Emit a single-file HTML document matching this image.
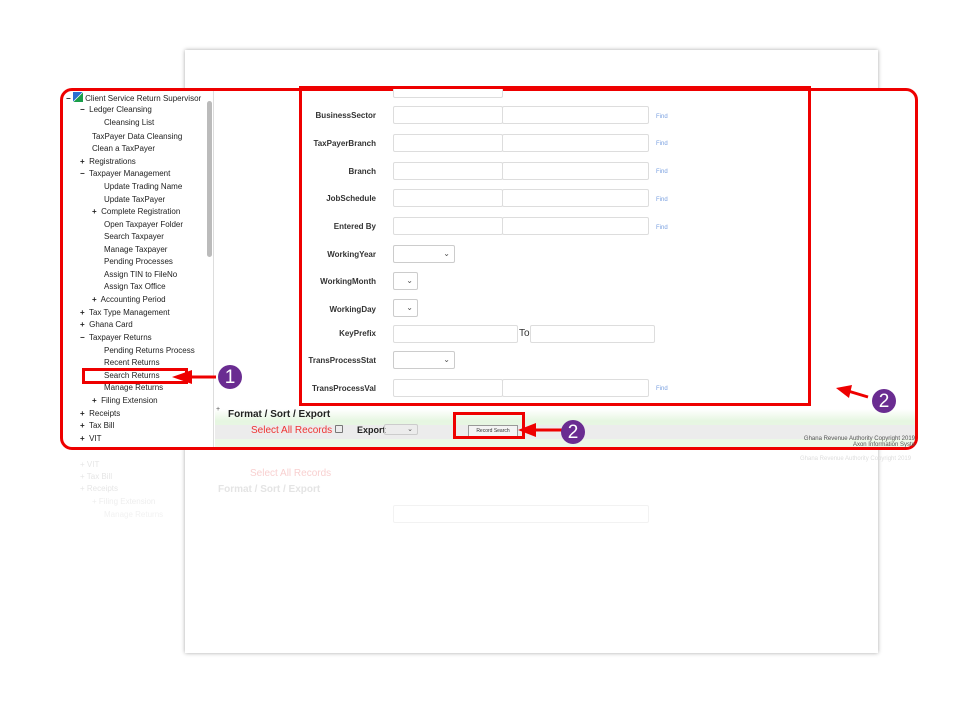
<!DOCTYPE html>
<html><head><meta charset="utf-8"><style>
body{margin:0;width:960px;height:720px;background:#fff;position:relative;overflow:hidden;font-family:"Liberation Sans",Arial,sans-serif}
.a{position:absolute}
.card{left:185px;top:50px;width:693px;height:603px;background:#fff;box-shadow:0 0 4px rgba(0,0,0,.35)}
.nav{font-size:8px;color:#222;white-space:nowrap}
.lbl{font-size:8px;font-weight:bold;color:#333;text-align:right;width:110px;left:266px}
.in{border:1px solid #ddd;border-radius:2px;height:18px;background:#fff;box-sizing:border-box}
.find{font-size:6px;color:#7aa0e0;left:656px}
.sel{border:1px solid #ccc;border-radius:2px;height:18px;box-sizing:border-box;font-size:8px;color:#555;text-align:right;padding-right:4px;line-height:16px}
.circ{width:24px;height:24px;border-radius:50%;background:#6a2c91;color:#fff;font-size:19px;text-align:center;line-height:25px}
.r{color:#e6e6e6}
</style></head><body>
<div class="a card"></div>
<!-- reflection -->
<div class="a nav r" style="left:80px;top:460px">+ VIT</div>
<div class="a nav r" style="left:80px;top:472px">+ Tax Bill</div>
<div class="a nav r" style="left:80px;top:484px">+ Receipts</div>
<div class="a nav r" style="left:92px;top:497px;color:#eee">+ Filing Extension</div>
<div class="a nav r" style="left:104px;top:510px;color:#f2f2f2">Manage Returns</div>
<div class="a" style="left:250px;top:468px;font-size:10px;color:#f8d0d0">Select All Records</div>
<div class="a" style="left:218px;top:484px;font-size:10px;color:#e4e4e4;font-weight:bold">Format / Sort / Export</div>
<div class="a" style="left:800px;top:456px;font-size:6px;color:#ddd">Ghana Revenue Authority Copyright 2019</div>
<div class="a in" style="left:393px;top:505px;width:256px;border-color:#f2f2f2"></div>

<!-- main frame -->
<div class="a" style="left:60px;top:88px;width:858px;height:362px;border:3px solid #e00;border-radius:12px;box-sizing:border-box;overflow:hidden;background:#fff">
  <div class="a" style="left:150px;top:0;width:1px;height:360px;background:#ddd"></div>
  <div class="a" style="left:144px;top:10px;width:5px;height:156px;background:#bbb;border-radius:3px"></div>
  <div class="a" style="left:152px;top:318px;width:700px;height:40px;background:linear-gradient(#fff,#e6f6e1 30%,#eef9ea)"></div>
  <div class="a" style="left:152px;top:334px;width:700px;height:14px;background:#ececec"></div>
</div>
<!-- nav -->
<div class="a nav" style="left:66px;top:92px"><b>−</b> <span style="display:inline-block;width:10px;height:10px;background:linear-gradient(135deg,#2a6fd1 45%,#fff 50%,#1a9e4a 55%);vertical-align:-1px"></span> Client Service Return Supervisor</div>
<div class="a nav" style="left:80px;top:105px"><b>−</b>&nbsp; Ledger Cleansing</div>
<div class="a nav" style="left:104px;top:118px">Cleansing List</div>
<div class="a nav" style="left:92px;top:132px">TaxPayer Data Cleansing</div>
<div class="a nav" style="left:92px;top:144px">Clean a TaxPayer</div>
<div class="a nav" style="left:80px;top:157px"><b>+</b>&nbsp; Registrations</div>
<div class="a nav" style="left:80px;top:169px"><b>−</b>&nbsp; Taxpayer Management</div>
<div class="a nav" style="left:104px;top:182px">Update Trading Name</div>
<div class="a nav" style="left:104px;top:195px">Update TaxPayer</div>
<div class="a nav" style="left:92px;top:207px"><b>+</b>&nbsp; Complete Registration</div>
<div class="a nav" style="left:104px;top:220px">Open Taxpayer Folder</div>
<div class="a nav" style="left:104px;top:232px">Search Taxpayer</div>
<div class="a nav" style="left:104px;top:245px">Manage Taxpayer</div>
<div class="a nav" style="left:104px;top:257px">Pending Processes</div>
<div class="a nav" style="left:104px;top:270px">Assign TIN to FileNo</div>
<div class="a nav" style="left:104px;top:282px">Assign Tax Office</div>
<div class="a nav" style="left:92px;top:295px"><b>+</b>&nbsp; Accounting Period</div>
<div class="a nav" style="left:80px;top:308px"><b>+</b>&nbsp; Tax Type Management</div>
<div class="a nav" style="left:80px;top:320px"><b>+</b>&nbsp; Ghana Card</div>
<div class="a nav" style="left:80px;top:333px"><b>−</b>&nbsp; Taxpayer Returns</div>
<div class="a nav" style="left:104px;top:346px">Pending Returns Process</div>
<div class="a nav" style="left:104px;top:358px">Recent Returns</div>
<div class="a nav" style="left:104px;top:371px">Search Returns</div>
<div class="a nav" style="left:104px;top:383px">Manage Returns</div>
<div class="a nav" style="left:92px;top:396px"><b>+</b>&nbsp; Filing Extension</div>
<div class="a nav" style="left:80px;top:409px"><b>+</b>&nbsp; Receipts</div>
<div class="a nav" style="left:80px;top:421px"><b>+</b>&nbsp; Tax Bill</div>
<div class="a nav" style="left:80px;top:434px"><b>+</b>&nbsp; VIT</div>
<div class="a" style="left:82px;top:368px;border:3px solid #e00;width:106px;box-sizing:border-box;height:16px"></div>
<svg class="a" style="left:150px;top:365px" width="70" height="24"><line x1="66" y1="12" x2="40" y2="12" stroke="#e00" stroke-width="3"/><polygon points="22,12 42,5 42,19" fill="#e00"/></svg>
<div class="a circ" style="left:218px;top:365px">1</div>

<!-- form box -->
<div class="a in" style="left:393px;top:80px;width:110px;height:18px"></div>
<div class="a" style="left:385px;top:60px;width:130px;height:28px;background:#fff"></div>
<div class="a" style="left:299px;top:86px;width:512px;height:320px;border:3px solid #e00;box-sizing:border-box"></div>

<div class="a lbl" style="top:111px">BusinessSector</div>
<div class="a in" style="left:393px;top:106px;width:110px"></div><div class="a in" style="left:502px;top:106px;width:147px"></div><div class="a find" style="top:114px">Find</div>
<div class="a lbl" style="top:139px">TaxPayerBranch</div>
<div class="a in" style="left:393px;top:134px;width:110px"></div><div class="a in" style="left:502px;top:134px;width:147px"></div><div class="a find" style="top:141px">Find</div>
<div class="a lbl" style="top:167px">Branch</div>
<div class="a in" style="left:393px;top:162px;width:110px"></div><div class="a in" style="left:502px;top:162px;width:147px"></div><div class="a find" style="top:169px">Find</div>
<div class="a lbl" style="top:194px">JobSchedule</div>
<div class="a in" style="left:393px;top:189px;width:110px"></div><div class="a in" style="left:502px;top:189px;width:147px"></div><div class="a find" style="top:197px">Find</div>
<div class="a lbl" style="top:222px">Entered By</div>
<div class="a in" style="left:393px;top:217px;width:110px"></div><div class="a in" style="left:502px;top:217px;width:147px"></div><div class="a find" style="top:225px">Find</div>
<div class="a lbl" style="top:250px">WorkingYear</div>
<div class="a sel" style="left:393px;top:245px;width:62px">⌄</div>
<div class="a lbl" style="top:277px">WorkingMonth</div>
<div class="a sel" style="left:393px;top:272px;width:25px">⌄</div>
<div class="a lbl" style="top:305px">WorkingDay</div>
<div class="a sel" style="left:393px;top:299px;width:25px">⌄</div>
<div class="a lbl" style="top:329px">KeyPrefix</div>
<div class="a in" style="left:393px;top:325px;width:125px"></div><div class="a" style="left:519px;top:328px;font-size:10px;color:#333">To</div><div class="a in" style="left:530px;top:325px;width:125px"></div>
<div class="a lbl" style="top:356px">TransProcessStat</div>
<div class="a sel" style="left:393px;top:351px;width:62px">⌄</div>
<div class="a lbl" style="top:384px">TransProcessVal</div>
<div class="a in" style="left:393px;top:379px;width:110px"></div><div class="a in" style="left:502px;top:379px;width:147px"></div><div class="a find" style="top:386px">Find</div>

<svg class="a" style="left:830px;top:380px" width="40" height="24"><line x1="38" y1="17" x2="18" y2="11" stroke="#e00" stroke-width="3"/><polygon points="6,8 22,5 19,18" fill="#e00"/></svg>
<div class="a circ" style="left:872px;top:389px">2</div>

<!-- format row -->
<div class="a" style="left:216px;top:406px;font-size:7px;color:#555">+</div>
<div class="a" style="left:228px;top:409px;font-size:10px;font-weight:bold;color:#222">Format / Sort / Export</div>
<div class="a" style="left:251px;top:425px;font-size:10px;color:#e33">Select All Records <span style="display:inline-block;width:6px;height:6px;border:1px solid #777;border-radius:1px;vertical-align:0"></span></div>
<div class="a" style="left:357px;top:425px;font-size:9px;font-weight:bold;color:#222">Export</div>
<div class="a sel" style="left:384px;top:424px;width:34px;height:11px;line-height:10px;font-size:7px">⌄</div>
<div class="a" style="left:468px;top:425px;width:48px;height:10px;border:1px solid #999;background:#f4f4f4;font-size:5px;line-height:10px;text-align:center;color:#333">Record Search</div>
<div class="a" style="left:453px;top:412px;width:72px;height:27px;border:3px solid #e00;box-sizing:border-box"></div>
<svg class="a" style="left:510px;top:418px" width="60" height="24"><line x1="58" y1="12" x2="24" y2="12" stroke="#e00" stroke-width="3"/><polygon points="8,12 26,5 26,19" fill="#e00"/></svg>
<div class="a circ" style="left:561px;top:420px">2</div>
<div class="a" style="left:760px;top:436px;font-size:6px;color:#555;text-align:right;width:155px;line-height:6px">Ghana Revenue Authority Copyright 2019<br>Axon Information Syste</div>
</body></html>
